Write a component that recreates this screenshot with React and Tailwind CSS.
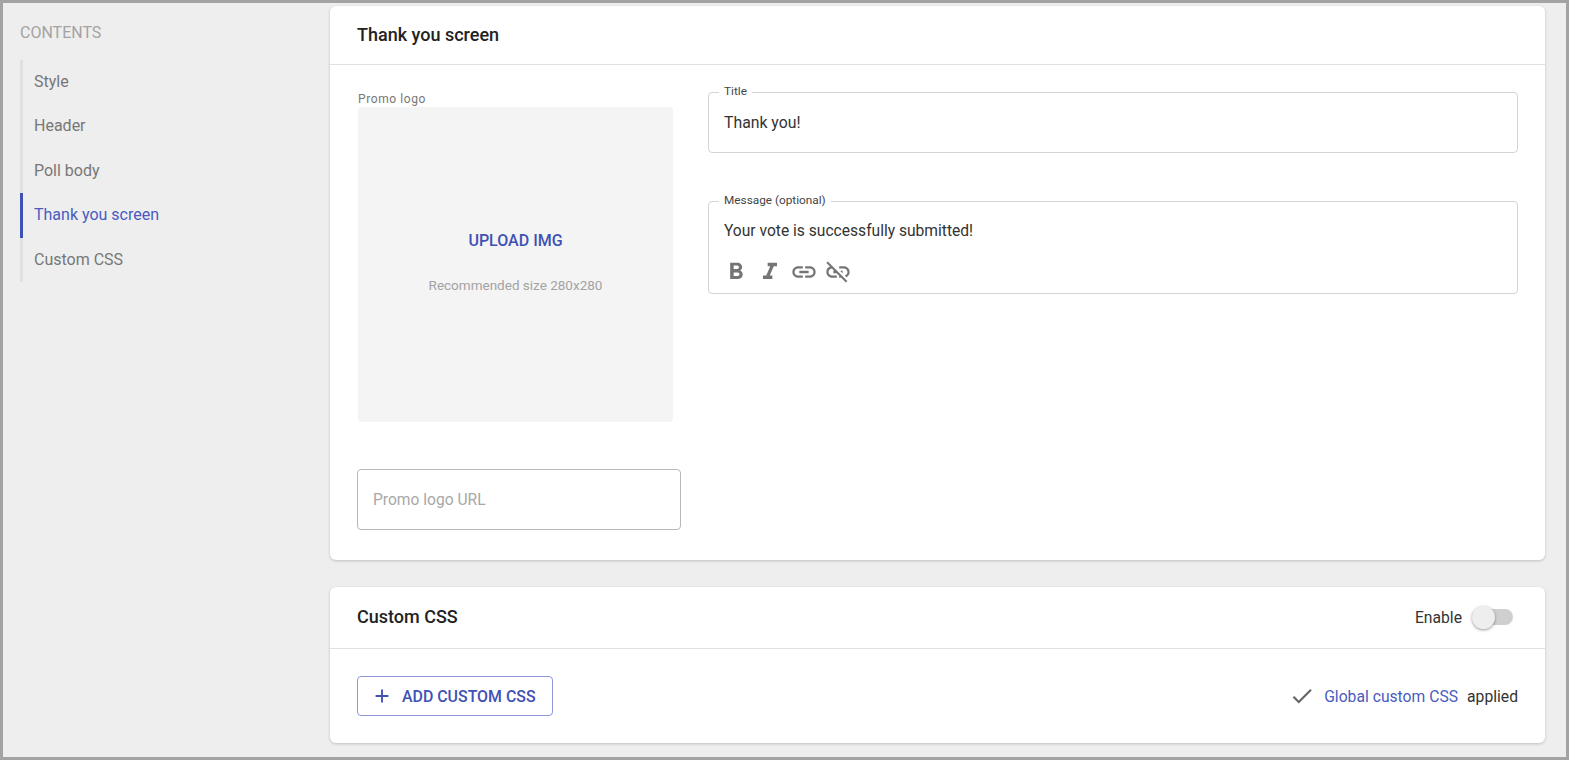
import React from "react";
import { MdAdd, MdCheck, MdFormatBold, MdFormatItalic, MdLink, MdLinkOff } from "react-icons/md";

const sections = ["Style", "Header", "Poll body", "Thank you screen", "Custom CSS"];

const Field = ({ label, className, children }) => (
  <fieldset className={`rounded border border-[#d4d4d4] px-[15px] ${className}`}>
    <legend className="ml-[-5px] px-[5px] pb-[2px] text-[11.8px] leading-4 text-[#444]">{label}</legend>
    {children}
  </fieldset>
);

const App = () => {
  return (
    <div className="flex h-[760px] border-[3px] border-[#a3a3a3] bg-[#eeeeee] font-['Roboto',sans-serif] text-[#333]">
      {/* Sidebar */}
      <aside className="w-[327px] shrink-0 pl-[17px]">
        <h2 className="mt-[20px] text-base leading-5 text-[#a3a3a3]">CONTENTS</h2>
        <ul className="mt-[17px] w-fit border-l-[3px] border-[#e0e0e0]">
          {sections.map((name) => (
            <li
              key={name}
              className={
                name === "Thank you screen"
                  ? "-ml-[3px] flex h-[44.4px] w-[200px] items-center border-l-[3px] border-[#3f51b5] pb-[0.4px] pl-[11px] text-base text-[#4a5bc0]"
                  : "flex h-[44.4px] w-[200px] items-center pb-[0.4px] pl-[11px] text-base text-[#777]"
              }
            >
              {name}
            </li>
          ))}
        </ul>
      </aside>

      {/* Main column */}
      <main className="flex w-[1215px] shrink-0 flex-col gap-[27px] pt-[3px]">
        <section className="h-[554px] rounded-md bg-white shadow-[0_1px_3px_rgba(0,0,0,0.2)]">
          <header className="flex h-[59px] items-center border-b border-[#e0e0e0] px-[27px] pb-[2px]">
            <h3 className="text-[18px] font-medium text-[#222]">Thank you screen</h3>
          </header>
          <div className="flex gap-[27px] px-[27px] pt-[18px]">
            <div className="w-[324px] shrink-0">
              <div className="ml-px pt-[8px] text-xs leading-4 tracking-[0.6px] text-[#777]">Promo logo</div>
              <div className="ml-px flex h-[315px] w-[315px] flex-col items-center rounded bg-[#f4f4f4]">
                <span className="mt-[124px] text-base font-medium leading-5 text-[#3f51b5]">UPLOAD IMG</span>
                <span className="mt-[24px] text-[13.5px] leading-5 text-[#a3a3a3]">Recommended size 280x280</span>
              </div>
              <div className="mt-[47px] flex h-[61px] items-center rounded border border-[#b8b8b8] px-[15px] pt-[2px] text-[15.6px] text-[#a8a8a8]">
                Promo logo URL
              </div>
            </div>
            <div className="flex flex-1 flex-col gap-[39px]">
              <Field label="Title" className="h-[70px]">
                <div className="mt-[10px] text-[15.8px] leading-6">Thank you!</div>
              </Field>
              <Field label="Message (optional)" className="h-[102px]">
                <div className="mt-[9px] text-[15.6px] leading-6">Your vote is successfully submitted!</div>
                <div className="ml-[-2.5px] mt-[15px] flex items-center gap-[6px] text-[#757575]">
                  <MdFormatBold className="h-7 w-7" />
                  <MdFormatItalic className="h-7 w-7" />
                  <MdLink className="h-7 w-7" />
                  <MdLinkOff className="h-7 w-7" />
                </div>
              </Field>
            </div>
          </div>
        </section>

        <section className="h-[156px] rounded-md bg-white shadow-[0_1px_3px_rgba(0,0,0,0.2)]">
          <header className="flex h-[62px] items-center justify-between border-b border-[#e0e0e0] pl-[27px] pr-[32px]">
            <h3 className="pb-[2px] text-[18px] font-medium text-[#222]">Custom CSS</h3>
            <div className="flex items-center gap-[10px]">
              <span className="text-[15.7px]">Enable</span>
              <div className="relative h-4 w-[41px] rounded-full bg-[#cfcfcf]">
                <div className="absolute left-0 top-[-3px] h-[23px] w-[23px] rounded-full bg-[#eeeeee] shadow-[0_1px_3px_rgba(0,0,0,0.4)]" />
              </div>
            </div>
          </header>
          <div className="flex items-center justify-between px-[27px] pt-[27px]">
            <button className="flex h-10 w-[196px] items-center gap-[9px] rounded border border-[#8c97dc] pl-[13px] text-[15.9px] font-medium text-[#3f51b5]">
              <MdAdd className="h-[22px] w-[22px]" />
              <span className="pt-px">ADD CUSTOM CSS</span>
            </button>
            <div className="flex items-center text-[15.7px]">
              <MdCheck className="mr-[9px] h-[26px] w-[26px] text-[#666]" />
              <span className="pt-px text-[#4a5bc0]">Global custom CSS</span>
              <span className="ml-[9px] pt-px">applied</span>
            </div>
          </div>
        </section>
      </main>
    </div>
  );
};

export default App;
